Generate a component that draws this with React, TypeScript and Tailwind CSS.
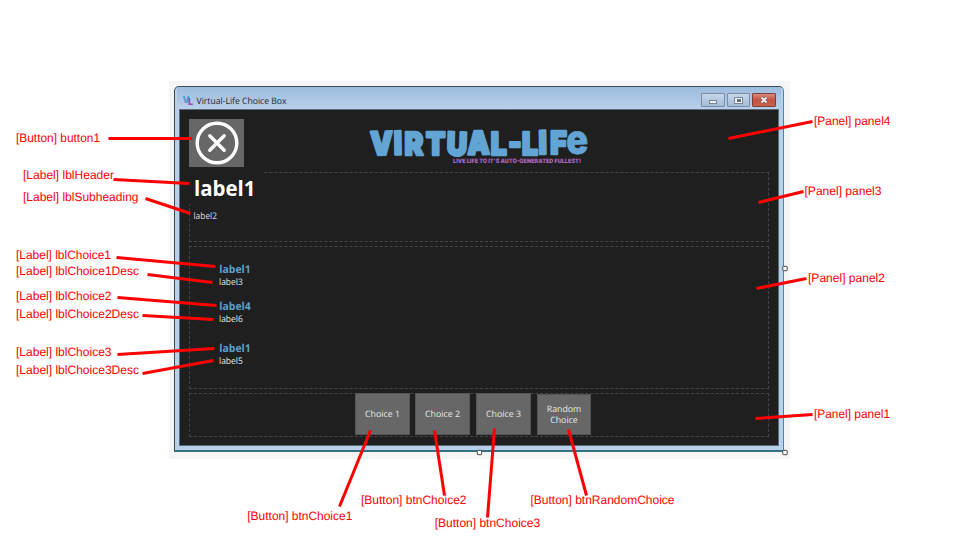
import React from "react";

const uiFont = "font-['Open_Sans','Noto_Sans',sans-serif]";

type Callout = { text: string; x: number; y: number; w: number; line: [number, number, number, number] };

const callouts: Callout[] = [
  { text: "[Button] button1", x: 16, y: 142, w: 84, line: [108.5, 138.5, 192, 138.5] },
  { text: "[Label] lblHeader", x: 23, y: 179, w: 91, line: [113.5, 179.5, 189.5, 183.5] },
  { text: "[Label] lblSubheading", x: 23, y: 200.6, w: 115.5, line: [145.5, 198.5, 190.5, 213.5] },
  { text: "[Label] lblChoice1", x: 16, y: 259, w: 95, line: [116.5, 257.5, 215.5, 266.5] },
  { text: "[Label] lblChoice1Desc", x: 16, y: 275.3, w: 123, line: [147.5, 274.5, 212.5, 282.5] },
  { text: "[Label] lblChoice2", x: 16, y: 300.3, w: 95.5, line: [117.5, 297.5, 216.5, 305.5] },
  { text: "[Label] lblChoice2Desc", x: 16, y: 318, w: 123, line: [142.5, 315.5, 213.5, 319.5] },
  { text: "[Label] lblChoice3", x: 16, y: 356.2, w: 95.5, line: [117.5, 354.5, 214.5, 348.5] },
  { text: "[Label] lblChoice3Desc", x: 16, y: 374, w: 123, line: [142.5, 373.5, 213.5, 360.5] },
  { text: "[Panel] panel4", x: 814, y: 124.8, w: 76.5, line: [728.5, 138.5, 812.5, 121.5] },
  { text: "[Panel] panel3", x: 804.5, y: 195.2, w: 77, line: [758.5, 202.5, 803.5, 191.5] },
  { text: "[Panel] panel2", x: 808, y: 282, w: 77, line: [756.5, 288.5, 806.5, 278.5] },
  { text: "[Panel] panel1", x: 814, y: 417.8, w: 76, line: [755.5, 418.5, 812.5, 414.5] },
  { text: "[Button] btnChoice1", x: 247.3, y: 520.4, w: 105, line: [370.5, 430.5, 339.5, 506.5] },
  { text: "[Button] btnChoice2", x: 361, y: 504, w: 105.5, line: [434.5, 430.5, 444.5, 495.5] },
  { text: "[Button] btnChoice3", x: 434.7, y: 527, w: 105.5, line: [494.5, 428.5, 487.5, 517.5] },
  { text: "[Button] btnRandomChoice", x: 530.5, y: 504, w: 144, line: [568.5, 429.5, 586.5, 495.5] },
];

const handles = [
  { x: 785, y: 268.5 },
  { x: 785, y: 452.5 },
  { x: 479.5, y: 452.5 },
];

function Logo() {
  return (
    <svg width="226" height="46" viewBox="0 0 226 46" className="mt-[14px] ml-[121px] block overflow-visible">
      <text
        transform="scale(0.88 1)"
        x="6.2 33 44.8 69.2 92.6 116.5 143 162.8 178.4 197.4 210.5 229.2"
        y="31 30.5 31 30.5 31 30.5 30.5 29.5 30.5 30 30 30.5"
        rotate="-1 -1 0 0 2 -1 0 0 0 -1 0 -3"
        fontSize="32"
        strokeWidth="2.6"
        strokeLinejoin="round"
        className="fill-[#62a4d3] stroke-[#62a4d3] font-['Inter',sans-serif] font-black"
      >
        VIRTUAL-LIF<tspan fontSize="41" strokeWidth="0.6">e</tspan>
      </text>
      <text
        x="88"
        y="39.4"
        fontSize="6"
        textLength="128"
        lengthAdjust="spacingAndGlyphs"
        className="fill-[#a865b5] font-['Inter',sans-serif] font-black [text-rendering:geometricPrecision]"
      >
        LIVE LIFE TO IT'S AUTO-GENERATED FULLEST!
      </text>
    </svg>
  );
}

function TitleBar() {
  const btn = "flex h-[14px] items-center justify-center border border-[#7d8da3] rounded-[1px]";
  return (
    <div className="flex h-[22px] shrink-0 items-start justify-between bg-linear-to-b from-[#9dbcdd] to-[#b9d0ea] pl-[5px] pr-[5px]">
      <div className="flex items-center pt-[7px]">
        <svg width="13" height="12" viewBox="0 0 13 12" className="overflow-visible">
          <text x="0.5" y="8.5" fontSize="9" className="fill-[#4f9fd3] font-['Inter',sans-serif] font-black">V</text>
          <text x="6" y="11" fontSize="9" className="fill-[#9b4fae] font-['Inter',sans-serif] font-black">L</text>
        </svg>
        <svg width="100" height="12" className="overflow-visible">
          <text x="1.5" y="9.5" fontSize="8.8" textLength="90" lengthAdjust="spacingAndGlyphs" className={`fill-[#1c2530] [text-rendering:geometricPrecision] ${uiFont}`}>
            Virtual-Life Choice Box
          </text>
        </svg>
      </div>
      <div className="flex gap-[2px] pt-[6px]">
        <div className={`${btn} w-[24px] bg-linear-to-b from-[#c5d7ea] to-[#a4bcd8]`}>
          <div className="mt-[3px] h-[4px] w-[8px] border border-[#7b8590] bg-[#eef2f6]" />
        </div>
        <div className={`${btn} w-[23px] bg-linear-to-b from-[#c5d7ea] to-[#a4bcd8]`}>
          <div className="flex h-[7px] w-[9px] items-center justify-center border border-[#7b8590] bg-[#eef2f6]">
            <div className="h-[3px] w-[4px] bg-[#67727f]" />
          </div>
        </div>
        <div className="flex h-[14px] w-[24px] items-center justify-center rounded-[1px] border border-[#7c3f3d] bg-linear-to-b from-[#d88a7d] via-[#c4523f] to-[#c8614b]">
          <svg width="10" height="8" viewBox="0 0 10 8">
            <path d="M2.5 1.5 7.5 6.5M7.5 1.5 2.5 6.5" stroke="#6f5a60" strokeWidth="3.4" />
            <path d="M2.5 1.5 7.5 6.5M7.5 1.5 2.5 6.5" stroke="#f4eeee" strokeWidth="1.9" />
          </svg>
        </div>
      </div>
    </div>
  );
}

function Choice({ title, desc, className }: { title: string; desc: string; className: string }) {
  return (
    <svg width="50" height="28" className={`block shrink-0 overflow-visible [text-rendering:geometricPrecision] ${className}`}>
      <text x="0.3" y="13" fontSize="11" textLength="31.5" lengthAdjust="spacingAndGlyphs" className={`fill-[#5c9fd0] font-bold ${uiFont}`}>
        {title}
      </text>
      <text x="0" y="25.2" fontSize="9" textLength="23.8" lengthAdjust="spacingAndGlyphs" className={`fill-[#e6e6e6] ${uiFont}`}>
        {desc}
      </text>
    </svg>
  );
}

function ChoiceButton({ children, className }: { children: React.ReactNode; className: string }) {
  return (
    <button
      className={`flex shrink-0 items-center justify-center border border-[#555555] bg-[#676767] text-center text-[8.8px] leading-[11px] text-[#e9e9e9] [text-rendering:geometricPrecision] ${uiFont} ${className}`}
    >
      {children}
    </button>
  );
}

function FormWindow() {
  return (
    <div className="flex h-[366px] w-[610px] flex-col rounded-t-[5px] border-x border-t border-b-2 border-t-[#3e4a57] border-r-[#3c8ea5] border-b-[#35727f] border-l-[#3f4852] bg-[#b9d0ea] px-[2px] pb-[1px]">
      <TitleBar />
      <div className="mx-[2px] mb-[3px] flex flex-1 flex-col border border-[#5a6879] bg-[#1f1f1f] px-[9px]">
        <div className="flex h-[62px] shrink-0 items-start">
          <button className="mt-[9px] flex h-[48px] w-[55px] items-center justify-center bg-[#676767]">
            <svg width="44" height="44" viewBox="0 0 44 44" fill="none" stroke="#ffffff" strokeLinecap="round">
              <circle cx="22" cy="22" r="19.8" strokeWidth="3.4" />
              <path d="M14.8 14.8 29.2 29.2M29.2 14.8 14.8 29.2" strokeWidth="3.4" />
            </svg>
          </button>
          <Logo />
        </div>
        <div className="h-[70px] shrink-0 border border-dashed border-[#454545]">
          <div className="-mt-px -ml-px h-[32px] w-[75px] bg-[#1f1f1f]">
            <svg width="75" height="32" className="block overflow-visible">
              <text x="5" y="24" fontSize="21.5" textLength="61.5" lengthAdjust="spacingAndGlyphs" className={`fill-white font-bold ${uiFont}`}>
                label1
              </text>
            </svg>
          </div>
          <svg width="50" height="14" className="mt-[5px] ml-[3px] block overflow-visible">
            <text x="0.5" y="10.3" fontSize="9" textLength="23.5" lengthAdjust="spacingAndGlyphs" className={`fill-[#dedede] [text-rendering:geometricPrecision] ${uiFont}`}>
              label2
            </text>
          </svg>
        </div>
        <div className="mt-[4px] h-[143px] shrink-0 border border-dashed border-[#454545] pl-[29px]">
          <Choice title="label1" desc="label3" className="mt-[13px]" />
          <Choice title="label4" desc="label6" className="mt-[9px]" />
          <Choice title="label1" desc="label5" className="mt-[14px]" />
        </div>
        <div className="mt-[4px] flex h-[44px] shrink-0 items-start border border-dashed border-[#454545] pl-[165px]">
          <ChoiceButton className="-mt-px h-[42px] w-[55px] pt-px">Choice 1</ChoiceButton>
          <ChoiceButton className="-mt-px ml-[5px] h-[42px] w-[55px] pt-px">Choice 2</ChoiceButton>
          <ChoiceButton className="-mt-px ml-[6px] h-[42px] w-[55px] pt-px">Choice 3</ChoiceButton>
          <ChoiceButton className="ml-[6px] h-[41px] w-[54px]">
            Random
            <br />
            Choice
          </ChoiceButton>
        </div>
      </div>
    </div>
  );
}

export default function App() {
  return (
    <div className="relative h-[540px] w-[960px] overflow-hidden bg-white pt-[81px] pl-[169px]">
      <div className="h-[378px] w-[621px] bg-[#f5f5f5] pt-[5px] pl-[5px]">
        <FormWindow />
      </div>
      <svg width="960" height="540" className="absolute inset-0 [text-rendering:geometricPrecision]">
        {handles.map((h) => (
          <rect key={`${h.x}-${h.y}`} x={h.x - 2.2} y={h.y - 2.2} width="4.4" height="4.4" rx="0.5" fill="#ffffff" stroke="#4a4a4a" />
        ))}
        {callouts.map((c) => (
          <g key={c.text}>
            <line x1={c.line[0]} y1={c.line[1]} x2={c.line[2]} y2={c.line[3]} stroke="#ff0000" strokeWidth="3" />
            <text
              x={c.x}
              y={c.y}
              fontSize="12.2"
              textLength={c.w}
              lengthAdjust="spacingAndGlyphs"
              className="fill-[#ff0000] font-['Liberation_Sans',Arial,sans-serif]"
            >
              {c.text}
            </text>
          </g>
        ))}
      </svg>
    </div>
  );
}
